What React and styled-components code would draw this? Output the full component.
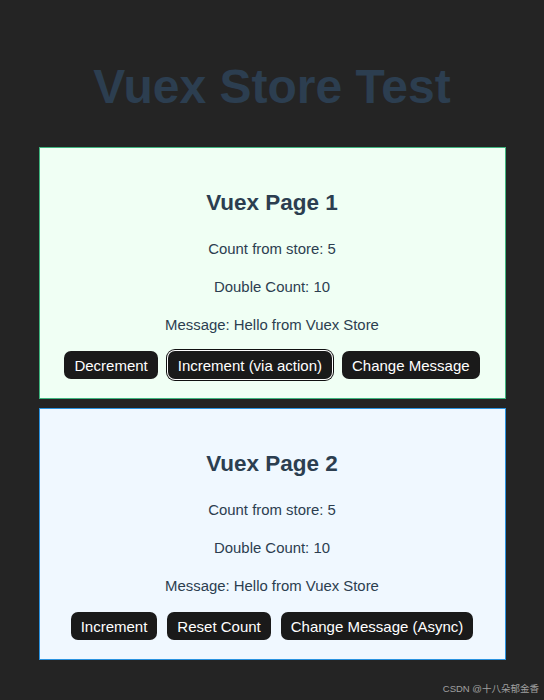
import React from "react";
import styled, { createGlobalStyle, css } from "styled-components";

const Global = createGlobalStyle`
  html, body { margin: 0; padding: 0; background: #242424; }
  body { font-family: "Liberation Sans", Arial, Helvetica, sans-serif; }
  * { box-sizing: border-box; }
`;

const Page = styled.div`
  display: flex;
  flex-direction: column;
  align-items: center;
  padding-top: 59px;
  min-height: 700px;
  color: #2c3e50;
  text-align: center;
`;

const Title = styled.h1`
  margin: 0 0 33px;
  font-size: 48px;
  line-height: 1.15;
  font-weight: 700;
  color: #2c3e50;
`;

const Cards = styled.div`
  display: flex;
  flex-direction: column;
  gap: 9px;
  width: 467px;
`;

const Card = styled.section`
  height: 252px;
  padding: 42px 20px 0;
  border: 1px solid ${(p) => p.$border};
  background: ${(p) => p.$bg};
  display: flex;
  flex-direction: column;
  align-items: center;
`;

const CardTitle = styled.h2`
  margin: 0 0 25px;
  font-size: 22.5px;
  line-height: 1.15;
  font-weight: 700;
  color: #2c3e50;
`;

const Line = styled.p`
  margin: 0 0 21px;
  font-size: 14.9px;
  line-height: 1.15;
  color: #2c3e50;
  &:last-of-type { margin-bottom: 17px; }
`;

const Actions = styled.div`
  display: flex;
  justify-content: center;
  gap: 10px;
`;

const Button = styled.button`
  height: 28px;
  padding: 0 10px;
  border: none;
  border-radius: 7px;
  background: #1a1a1a;
  color: #ffffff;
  font-family: inherit;
  font-size: 15px;
  cursor: pointer;
  ${(p) =>
    p.$focused &&
    css`
      box-shadow: 0 0 0 1px #ffffff, 0 0 0 2px #101010;
    `}
`;

const Watermark = styled.div`
  align-self: stretch;
  margin-top: 24px;
  padding-right: 5px;
  text-align: right;
  font-family: "Liberation Sans", "Noto Sans CJK SC", sans-serif;
  font-size: 9.5px;
  line-height: 1;
  color: #a0a0a0;
`;

function StorePage({ title, border, bg, buttons }) {
  return (
    <Card $border={border} $bg={bg}>
      <CardTitle>{title}</CardTitle>
      <Line>Count from store: 5</Line>
      <Line>Double Count: 10</Line>
      <Line>Message: Hello from Vuex Store</Line>
      <Actions>
        {buttons.map((b) => (
          <Button key={b.label} $focused={b.focused}>
            {b.label}
          </Button>
        ))}
      </Actions>
    </Card>
  );
}

export default function App() {
  return (
    <>
      <Global />
      <Page>
        <Title>Vuex Store Test</Title>
        <Cards>
          <StorePage
            title="Vuex Page 1"
            border="#3fb57f"
            bg="#f0fff4"
            buttons={[
              { label: "Decrement" },
              { label: "Increment (via action)", focused: true },
              { label: "Change Message" },
            ]}
          />
          <StorePage
            title="Vuex Page 2"
            border="#2a93e0"
            bg="#f0f8ff"
            buttons={[
              { label: "Increment" },
              { label: "Reset Count" },
              { label: "Change Message (Async)" },
            ]}
          />
        </Cards>
        <Watermark>CSDN @十八朵郁金香</Watermark>
      </Page>
    </>
  );
}
